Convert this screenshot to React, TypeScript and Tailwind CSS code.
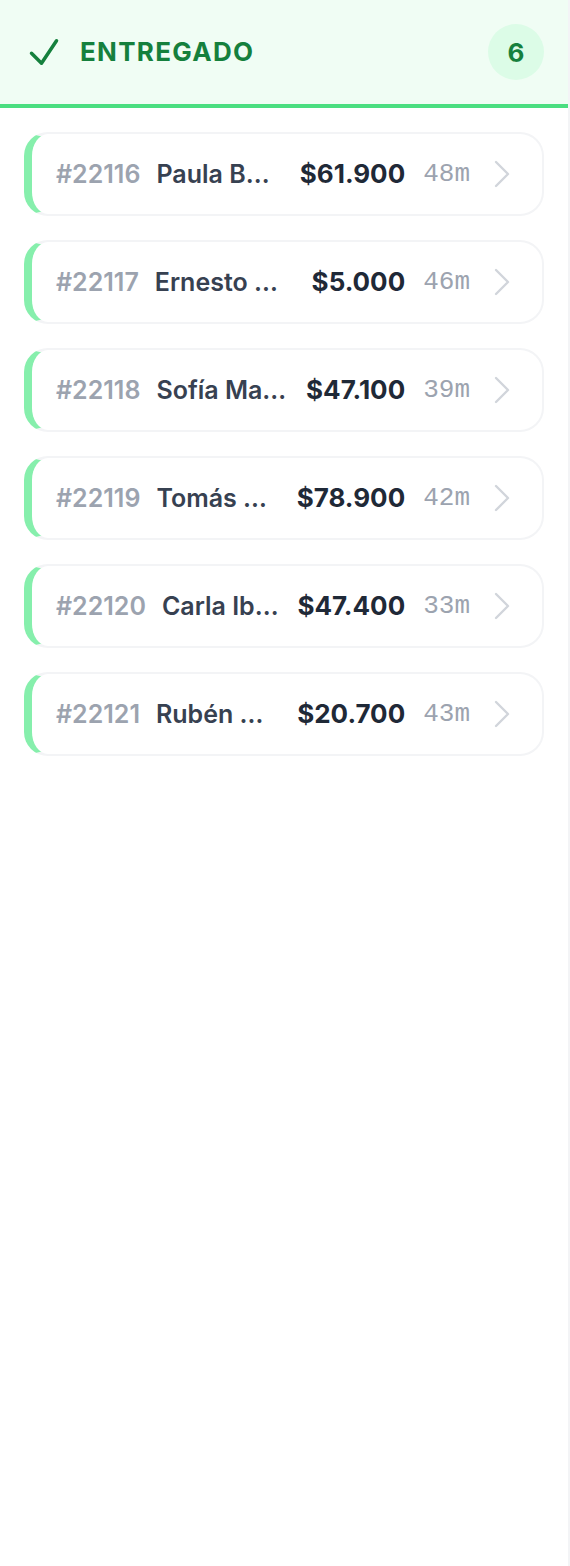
import React from 'react';

type Order = {
  id: number;
  name: string;
  total: string;
  age: string;
};

const orders: Order[] = [
  { id: 22116, name: 'Paula B…', total: '$61.900', age: '48m' },
  { id: 22117, name: 'Ernesto …', total: '$5.000', age: '46m' },
  { id: 22118, name: 'Sofía Ma…', total: '$47.100', age: '39m' },
  { id: 22119, name: 'Tomás …', total: '$78.900', age: '42m' },
  { id: 22120, name: 'Carla Ib…', total: '$47.400', age: '33m' },
  { id: 22121, name: 'Rubén …', total: '$20.700', age: '43m' },
];

const CheckIcon = () => (
  <svg width="40" height="40" viewBox="0 0 24 24" fill="none" stroke="currentColor" strokeWidth="2.1" strokeLinecap="round" strokeLinejoin="round">
    <path d="m4.5 12.75 6 6 9-13.5" />
  </svg>
);

const Chevron = () => (
  <svg width="16" height="28" viewBox="0 0 16 28" fill="none" stroke="currentColor" strokeWidth="2.4" strokeLinecap="round" strokeLinejoin="round">
    <path d="M2 2 14 14 2 26" />
  </svg>
);

const OrderCard: React.FC<{ order: Order }> = ({ order }) => (
  <div className="flex items-center bg-white border-2 border-[#f3f4f6] border-l-[8px] border-l-[#86efac] rounded-3xl pl-6 pr-8 py-[24px]">
    <span className="shrink-0 text-[25px] leading-8 font-semibold text-[#9ca3af]">#{order.id}</span>
    <span className="flex-1 min-w-0 ml-4 whitespace-nowrap text-[25px] leading-8 font-semibold text-[#374151]">{order.name}</span>
    <span className="shrink-0 ml-4 text-[26px] leading-8 font-bold text-[#1f2937]">{order.total}</span>
    <span className="shrink-0 ml-[18px] text-[26px] leading-8 text-[#9ca3af]" style={{ fontFamily: '"Liberation Mono", monospace' }}>
      {order.age}
    </span>
    <span className="shrink-0 ml-6 text-[#d1d5db]">
      <Chevron />
    </span>
  </div>
);

export default function App() {
  return (
    <div className="w-[570px] min-h-[1566px] bg-white" style={{ fontFamily: 'Inter, "Noto Sans", sans-serif' }}>
      <div className="w-full min-h-[1566px] border-r-2 border-[#f3f4f6] flex flex-col">
        <div className="flex items-center justify-between px-6 py-6 bg-[#f0fdf4] border-b-4 border-[#4ade80]">
          <div className="flex items-center gap-4 text-[#15803d]">
            <CheckIcon />
            <span className="text-[26px] leading-none font-bold tracking-wider">ENTREGADO</span>
          </div>
          <div className="w-14 h-14 rounded-full bg-[#dcfce7] flex items-center justify-center text-[26px] font-bold text-[#15803d]">
            6
          </div>
        </div>
        <div className="flex flex-col gap-6 px-6 pt-6">
          {orders.map(o => (
            <OrderCard key={o.id} order={o} />
          ))}
        </div>
      </div>
    </div>
  );
}
